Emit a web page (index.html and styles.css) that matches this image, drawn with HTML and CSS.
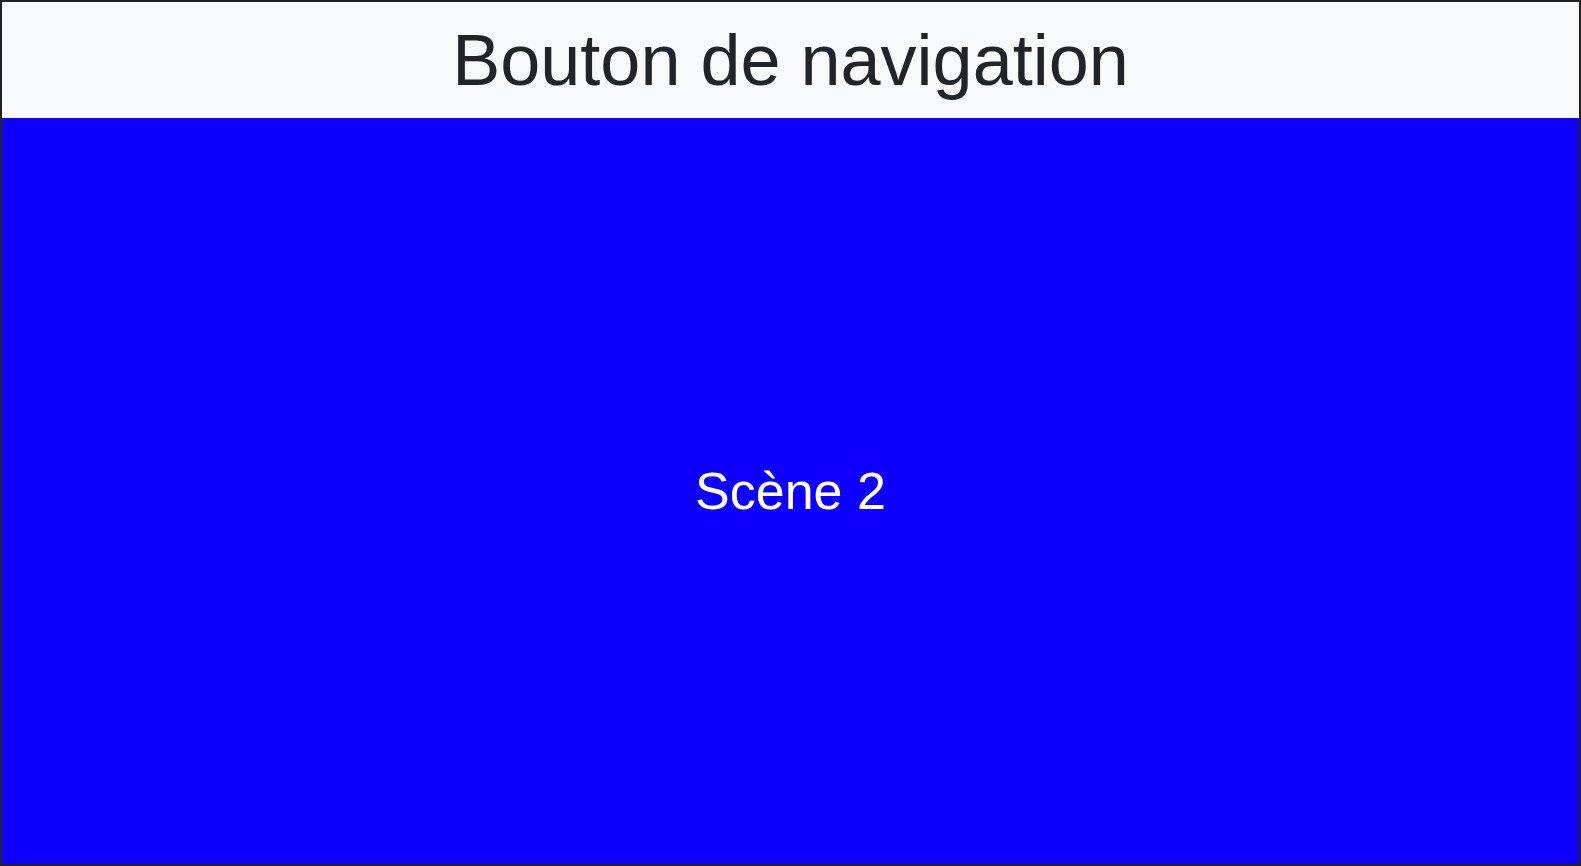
FILE: index.html
```html
<!DOCTYPE html>
<html lang="fr">
<head>
<meta charset="utf-8">
<title>Bouton de navigation</title>
<link rel="stylesheet" href="styles.css">
</head>
<body>
<div class="app">
  <header class="header">
    <h1 class="title">Bouton de navigation</h1>
  </header>
  <main class="scene">
    <span class="scene-label">Scène 2</span>
  </main>
</div>
</body>
</html>
```

FILE: styles.css
```css
html, body {
  margin: 0;
  padding: 0;
  height: 100%;
}
body {
  font-family: "Liberation Sans", Arial, sans-serif;
}
.app {
  box-sizing: border-box;
  width: 100vw;
  height: 100vh;
  border: 2px solid #222222;
  display: flex;
  flex-direction: column;
}
.header {
  height: 116px;
  flex: 0 0 auto;
  background: #f8f9fa;
  display: flex;
  align-items: center;
  justify-content: center;
}
.title {
  margin: 0;
  font-size: 72px;
  font-weight: 400;
  line-height: 1;
  color: #212529;
}
.scene {
  flex: 1 1 auto;
  background: #0d00ff;
  display: flex;
  align-items: center;
  justify-content: center;
}
.scene-label {
  color: #ffffff;
  font-size: 52px;
  line-height: 1;
}
```
